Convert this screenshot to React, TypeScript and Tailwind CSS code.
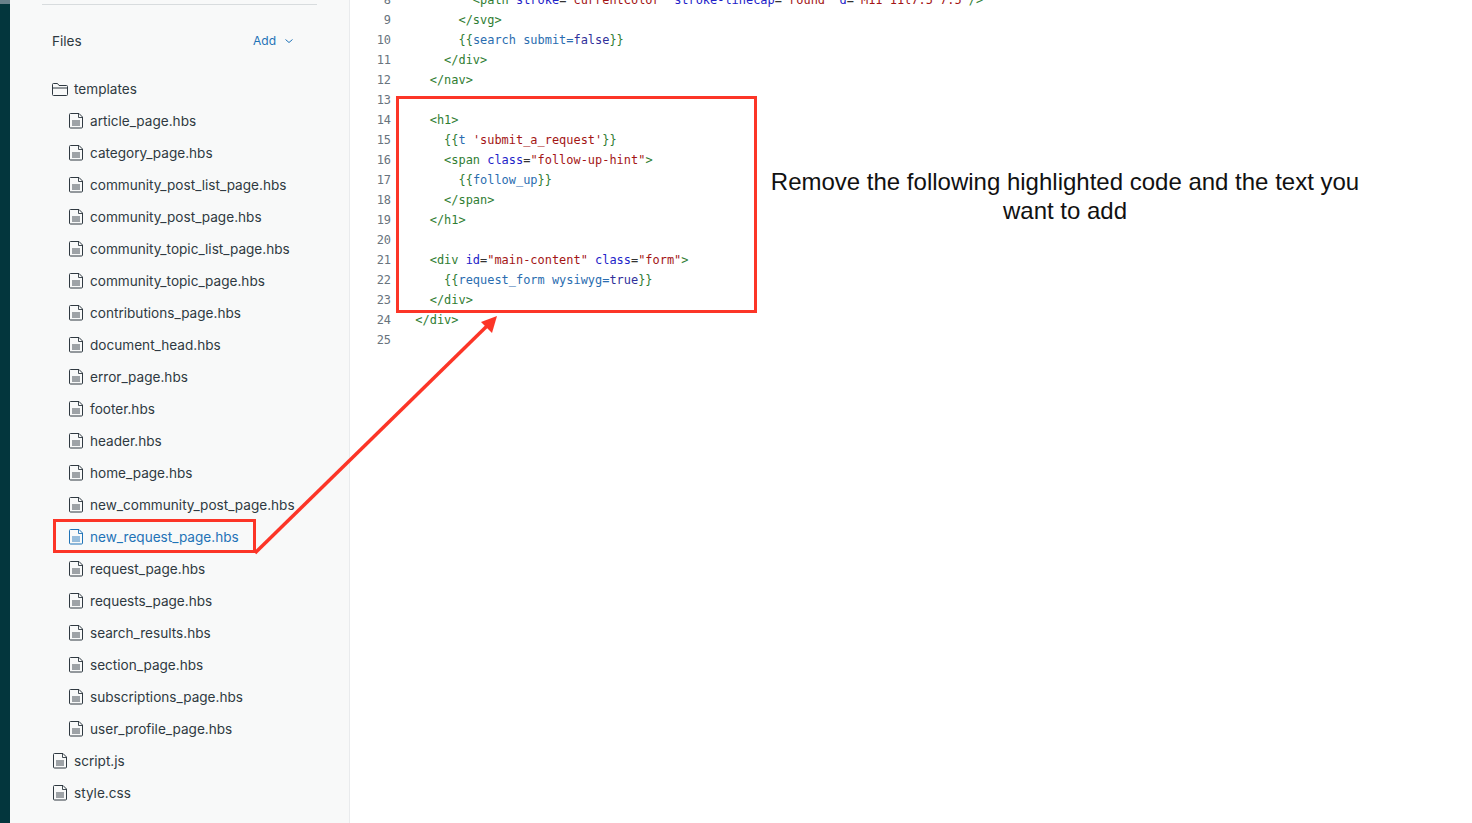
const templates = [
  'article_page.hbs',
  'category_page.hbs',
  'community_post_list_page.hbs',
  'community_post_page.hbs',
  'community_topic_list_page.hbs',
  'community_topic_page.hbs',
  'contributions_page.hbs',
  'document_head.hbs',
  'error_page.hbs',
  'footer.hbs',
  'header.hbs',
  'home_page.hbs',
  'new_community_post_page.hbs',
  'new_request_page.hbs',
  'request_page.hbs',
  'requests_page.hbs',
  'search_results.hbs',
  'section_page.hbs',
  'subscriptions_page.hbs',
  'user_profile_page.hbs',
];

const T = 'text-[#2f7d32]';
const A = 'text-[#2222c8]';
const S = 'text-[#a31515]';
const H = 'text-[#2a6db0]';
const V = 'text-[#30309a]';

// each line is a list of [class, text] pieces
const code: [string, string][][] = [
  [[T, '          <path '], [A, 'stroke'], ['', '='], [S, '"currentColor"'], ['', ' '], [A, 'stroke-linecap'], ['', '='], [S, '"round"'], ['', ' '], [A, 'd'], ['', '='], [S, '"M11 11l7.5 7.5"'], [T, '/>']],
  [[T, '        </svg>']],
  [[T, '        {{'], [H, 'search submit='], [V, 'false'], [T, '}}']],
  [[T, '      </div>']],
  [[T, '    </nav>']],
  [],
  [[T, '    <h1>']],
  [[T, '      {{'], [H, 't '], [S, "'submit_a_request'"], [T, '}}']],
  [[T, '      <span '], [A, 'class'], ['', '='], [S, '"follow-up-hint"'], [T, '>']],
  [[T, '        {{'], [H, 'follow_up'], [T, '}}']],
  [[T, '      </span>']],
  [[T, '    </h1>']],
  [],
  [[T, '    <div '], [A, 'id'], ['', '='], [S, '"main-content"'], ['', ' '], [A, 'class'], ['', '='], [S, '"form"'], [T, '>']],
  [[T, '      {{'], [H, 'request_form wysiwyg='], [V, 'true'], [T, '}}']],
  [[T, '    </div>']],
  [[T, '  </div>']],
  [],
];

function FileIcon({ className }: { className: string }) {
  return (
    <svg viewBox="0 0 16 16" className={`h-4 w-4 shrink-0 ${className}`} fill="none" stroke="currentColor" strokeWidth="1">
      <path d="M1.500 1.500a1 1 0 0 1 1-1h8.500l3.500 3.500V14a1 1 0 0 1-1 1h-11a1 1 0 0 1-1-1z" />
      <path d="M10.500.5v4h4M4 8h8M4 10h8M4 12h8" strokeWidth="0.9" />
    </svg>
  );
}

function FolderIcon() {
  return (
    <svg viewBox="0 0 16 16" className="h-4 w-4 shrink-0 text-[#2f3941]" fill="none" stroke="currentColor" strokeWidth="1">
      <path d="M.5 5V3.500a1 1 0 0 1 1-1h4l1.500 2h7.500a1 1 0 0 1 1 1V7M.5 5v8.500a1 1 0 0 0 1 1h13a1 1 0 0 0 1-1V7" />
      <path d="M.5 7h15" />
    </svg>
  );
}

export default function App() {
  return (
    <div className="relative flex h-[823px] overflow-hidden bg-white font-['Inter',sans-serif]">
      <div className="flex w-[10px] shrink-0 flex-col bg-[#03363d]">
        <div className="h-1 bg-[#68808a]" />
      </div>

      <aside className="w-[340px] shrink-0 border-r border-[#e9ebed] bg-[#f8f9f9] pl-[32px] text-[13.6px] text-[#2f3941]">
        <div className="mt-1 h-px w-[275px] bg-[#d8dcde]" />
        <div className="mt-[24px] flex h-[24px] w-[253px] items-center justify-between pl-[10px]">
          <span>Files</span>
          <span className="flex items-center gap-[7px] text-[12px] text-[#1f73b7]">
            Add
            <svg viewBox="0 0 12 12" className="h-3 w-3" fill="none" stroke="currentColor">
              <path d="M2.500 4.500l3.500 3 3.500-3" />
            </svg>
          </span>
        </div>

        <div className="mt-[20px] flex h-[32px] items-center gap-[6px] pl-[10px]">
          <FolderIcon />
          <span>templates</span>
        </div>
        {templates.map((name) => {
          const active = name === 'new_request_page.hbs';
          return (
            <div key={name} className={`flex h-[32px] items-center gap-[6px] pl-[26px] ${active ? 'text-[#1f73b7]' : ''}`}>
              <FileIcon className={active ? 'text-[#1f73b7]' : 'text-[#2f3941]'} />
              <span className="whitespace-nowrap">{name}</span>
            </div>
          );
        })}
        {['script.js', 'style.css'].map((name) => (
          <div key={name} className="flex h-[32px] items-center gap-[6px] pl-[10px]">
            <FileIcon className="text-[#2f3941]" />
            <span>{name}</span>
          </div>
        ))}
      </aside>

      <main className="-mt-[10px] pl-[24px] font-['DejaVu_Sans_Mono',monospace] text-[11.95px] leading-[20px] text-[#333]">
        {code.map((pieces, i) => (
          <div key={i} className="flex h-[20px] whitespace-pre">
            <span className="w-[17px] text-right text-[#68737d]">{i + 8}</span>
            <span className="pl-[10px]">
              {pieces.map(([cls, text], j) => (
                <span key={j} className={cls}>{text}</span>
              ))}
            </span>
          </div>
        ))}
      </main>

      {/* annotations drawn on top of the screenshot */}
      <div className="absolute left-[396px] top-[96px] h-[217px] w-[361px] border-[3px] border-[#fc3527]" />
      <div className="absolute left-[53px] top-[519px] h-[34px] w-[203px] border-[3px] border-[#fc3527]" />
      <svg className="absolute left-0 top-0 h-[823px] w-[1472px]" viewBox="0 0 1472 823" fill="none">
        <path d="M255 553L488 325" stroke="#fc3527" strokeWidth="3.500" />
        <path d="M497 316L492 333L481 322z" fill="#fc3527" />
      </svg>
      <p className="absolute left-[760px] top-[167px] w-[610px] text-center font-['Liberation_Sans',sans-serif] text-[24px] leading-[29px] text-[#111]">
        Remove the following highlighted code and the text you want to add
      </p>
    </div>
  );
}
